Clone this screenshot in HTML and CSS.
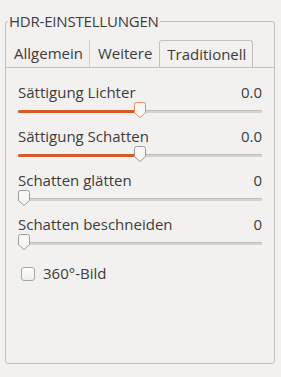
FILE: index.html
```html
<!DOCTYPE html>
<html lang="de">
<head>
  <meta charset="UTF-8">
  <meta name="viewport" content="width=device-width, initial-scale=1.0">
  <title>HDR-Einstellungen</title>
  <link rel="stylesheet" href="styles.css">
</head>
<body>
  <!-- HDR settings frame with notebook tabs -->
  <fieldset class="frame">
    <legend>HDR-EINSTELLUNGEN</legend>

    <div class="tabs">
      <div class="tab first">Allgemein</div>
      <div class="tab">Weitere</div>
      <div class="tab active">Traditionell</div>
    </div>

    <div class="page">
      <div class="row">
        <div class="row-head"><span>Sättigung Lichter</span><span>0.0</span></div>
        <div class="slider">
          <div class="track"><div class="fill" style="width: 50%"></div></div>
          <svg class="thumb focus" style="left: calc((100% - 12px) * 0.5)" width="12" height="16" viewBox="0 0 12 16">
            <path d="M2.5 0.5 H9.5 Q11.5 0.5 11.5 2.5 V10.5 L6 15.5 L0.5 10.5 V2.5 Q0.5 0.5 2.5 0.5 Z"/>
          </svg>
        </div>
      </div>

      <div class="row">
        <div class="row-head"><span>Sättigung Schatten</span><span>0.0</span></div>
        <div class="slider">
          <div class="track"><div class="fill" style="width: 50%"></div></div>
          <svg class="thumb" style="left: calc((100% - 12px) * 0.5)" width="12" height="16" viewBox="0 0 12 16">
            <path d="M2.5 0.5 H9.5 Q11.5 0.5 11.5 2.5 V10.5 L6 15.5 L0.5 10.5 V2.5 Q0.5 0.5 2.5 0.5 Z"/>
          </svg>
        </div>
      </div>

      <div class="row">
        <div class="row-head"><span>Schatten glätten</span><span>0</span></div>
        <div class="slider">
          <div class="track"><div class="fill" style="width: 6px"></div></div>
          <svg class="thumb" style="left: 0" width="12" height="16" viewBox="0 0 12 16">
            <path d="M2.5 0.5 H9.5 Q11.5 0.5 11.5 2.5 V10.5 L6 15.5 L0.5 10.5 V2.5 Q0.5 0.5 2.5 0.5 Z"/>
          </svg>
        </div>
      </div>

      <div class="row">
        <div class="row-head"><span>Schatten beschneiden</span><span>0</span></div>
        <div class="slider">
          <div class="track"><div class="fill" style="width: 6px"></div></div>
          <svg class="thumb" style="left: 0" width="12" height="16" viewBox="0 0 12 16">
            <path d="M2.5 0.5 H9.5 Q11.5 0.5 11.5 2.5 V10.5 L6 15.5 L0.5 10.5 V2.5 Q0.5 0.5 2.5 0.5 Z"/>
          </svg>
        </div>
      </div>

      <label class="check">
        <span class="box"></span>
        <span>360°-Bild</span>
      </label>
    </div>
  </fieldset>
</body>
</html>
```

FILE: styles.css
```css
/* Ubuntu-like GTK panel */
html, body {
  margin: 0;
  padding: 0;
  background-color: #f2f1f0;
  color: #3c3c3c;
  font-family: "Open Sans", "Noto Sans", sans-serif;
  font-size: 15px;
}

.frame {
  margin: 13px 6px 0 5px;
  padding: 11px 0 0;
  border: 1px solid #c4c1bd;
  border-radius: 3px;
  min-width: 0;
}

.frame legend {
  margin-left: 2px;
  padding: 0 1px;
  line-height: 16px;
  letter-spacing: -0.2px;
}

/* notebook tabs */
.tabs {
  display: flex;
  border-bottom: 1px solid #c4c1bd;
  height: 27px;
}

.tab {
  padding: 0 6px 0 8px;
  line-height: 27px;
}

.tab.first {
  border-right: 1px solid #d2cfcb;
}

.tab.active {
  margin-left: 1px;
  padding: 0 6px 0 7px;
  border: 1px solid #c4c1bd;
  border-bottom: none;
  border-radius: 3px 3px 0 0;
  line-height: 26px;
}

.page {
  height: 295px;
  padding: 16px 12px 0;
  box-sizing: border-box;
  display: flex;
  flex-direction: column;
  gap: 10px;
}

.row-head {
  display: flex;
  justify-content: space-between;
  line-height: 17px;
}

.slider {
  position: relative;
  height: 16px;
  margin-top: 1px;
}

.track {
  position: absolute;
  left: 0;
  right: 0;
  top: 8px;
  height: 3px;
  border-radius: 2px;
  background-color: #d4d3d1;
  box-shadow: inset 0 1px 0 #bdbcba;
}

.fill {
  height: 3px;
  border-radius: 2px;
  background-color: #d65a2a;
}

.thumb {
  position: absolute;
  top: 0;
}

.thumb path {
  fill: #f7f7f6;
  stroke: #9e9c99;
  stroke-width: 1;
}

.thumb.focus path {
  stroke: #e48b66;
}

.check {
  display: flex;
  align-items: center;
  gap: 8px;
  margin-top: 5px;
  padding-left: 3px;
  line-height: 17px;
}

.check .box {
  width: 12px;
  height: 12px;
  border: 1px solid #a9a7a4;
  border-radius: 3px;
  background: linear-gradient(#ffffff, #eeeeec);
}
```
